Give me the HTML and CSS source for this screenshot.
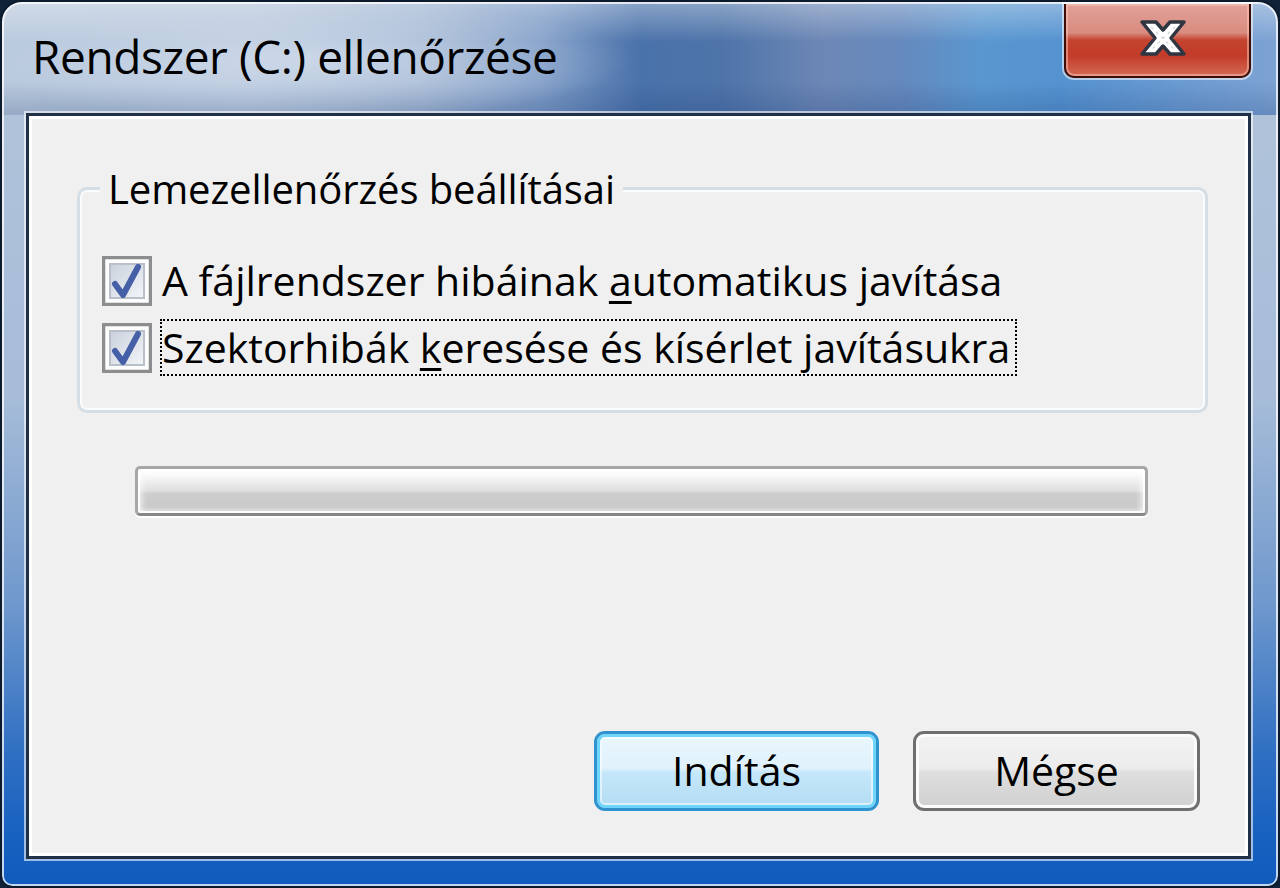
FILE: index.html
```html
<!DOCTYPE html>
<html lang="hu">
<head>
<meta charset="utf-8">
<title>Rendszer (C:) ellenőrzése</title>
<link rel="stylesheet" href="styles.css">
</head>
<body>
<div class="window">
  <div class="titlebar">
    <div class="title">Rendszer (C:) ellenőrzése</div>
    <button class="close" aria-label="Bezárás">
      <svg width="187" height="74" viewBox="0 0 187 74">
        <path d="M78 19 L92 19 L99 27 L106 19 L120 19 L107 35 L120 51 L106 51 L99 43 L92 51 L78 51 L91 35 Z" fill="#ffffff" stroke="#2f3541" stroke-width="3.5" stroke-linejoin="round"/>
        <path d="M87 24 L111 47 M111 24 L87 47" stroke="#d6d9df" stroke-width="1.5" stroke-dasharray="3 4" fill="none"/>
      </svg>
    </button>
  </div>
  <div class="client">
    <div class="group">
      <span class="legend">Lemezellenőrzés beállításai</span>
      <label class="row">
        <span class="cb">
          <svg width="50" height="50" viewBox="0 0 50 50">
            <defs>
              <linearGradient id="cbin" x1="0" y1="0" x2="1" y2="1">
                <stop offset="0" stop-color="#c9d1dc"/>
                <stop offset="1" stop-color="#f3f5f8"/>
              </linearGradient>
            </defs>
            <rect x="1.5" y="1.5" width="47" height="47" fill="#fdfdfd" stroke="#8c8d8e" stroke-width="3.5"/>
            <rect x="8" y="8" width="34" height="34" fill="url(#cbin)" stroke="#b9c0c9" stroke-width="2"/>
            <path d="M13 28 L21 39 L36 11" stroke="#4660a8" stroke-width="6" stroke-linecap="round" stroke-linejoin="round" fill="none"/>
          </svg>
        </span>
        <span class="text">A fájlrendszer hibáinak <u>a</u>utomatikus javítása</span>
      </label>
      <label class="row">
        <span class="cb">
          <svg width="50" height="50" viewBox="0 0 50 50">
            <rect x="1.5" y="1.5" width="47" height="47" fill="#fdfdfd" stroke="#8c8d8e" stroke-width="3.5"/>
            <rect x="8" y="8" width="34" height="34" fill="url(#cbin)" stroke="#b9c0c9" stroke-width="2"/>
            <path d="M13 28 L21 39 L36 11" stroke="#4660a8" stroke-width="6" stroke-linecap="round" stroke-linejoin="round" fill="none"/>
          </svg>
        </span>
        <span class="text focus">Szektorhibák <u>k</u>eresése és kísérlet javításukra</span>
      </label>
    </div>
    <div class="progress"></div>
    <div class="buttons">
      <button class="btn default">Indítás</button>
      <button class="btn cancel">Mégse</button>
    </div>
  </div>
</div>
</body>
</html>
```

FILE: styles.css
```css
html, body {
  margin: 0;
  padding: 0;
}

body {
  background: #0f2238;
  font-family: "Open Sans", "Noto Sans", sans-serif;
  font-weight: 500;
  color: #000;
}

.window {
  width: 1280px;
  height: 888px;
  box-sizing: border-box;
  border: 2px solid #0d1a2b;
  border-radius: 22px 22px 12px 12px;
  padding: 0 27px 27px 24px;
  display: flex;
  flex-direction: column;
  box-shadow: inset 0 0 0 2px rgba(255, 255, 255, 0.75);
  background:
    radial-gradient(ellipse 330px 60px at 300px 58px, rgba(214, 224, 238, 0.75), rgba(214, 224, 238, 0)),
    linear-gradient(180deg, rgba(255, 255, 255, 0.35) 0px, rgba(255, 255, 255, 0) 40px, rgba(20, 50, 110, 0) 80px, rgba(20, 50, 110, 0.2) 111px) top left / 100% 113px no-repeat,
    linear-gradient(90deg, #b9c9dd 0px, #b3c4da 250px, #9db3d0 420px, #7d9bc6 540px, #4a72aa 640px, #4e74a9 720px, #6c87b5 820px, #6589bd 900px, #5a97d0 980px, #5592d0 1060px, #7ea3d3 1280px) top left / 100% 113px no-repeat,
    linear-gradient(180deg, #b3c5db 0%, #a6bcd8 45%, #6f98cd 68%, #2f6fc2 85%, #1660c0 95%, #0f5abb 100%);
}

.titlebar {
  height: 111px;
  flex: none;
  display: flex;
  align-items: flex-start;
}

.title {
  margin-left: 6px;
  padding-top: 23px;
  font-size: 46px;
  line-height: 62px;
  letter-spacing: -0.4px;
  white-space: nowrap;
}

.close {
  margin-left: auto;
  margin-top: 2px;
  width: 187px;
  height: 74px;
  padding: 0;
  border: 2px solid #3d0d08;
  border-top: none;
  border-radius: 0 0 10px 10px;
  background: linear-gradient(180deg, #e2a198 0%, #d98c80 40%, #c4442f 50%, #c23c28 72%, #d26a55 100%);
  box-shadow: inset 0 0 0 2px rgba(255, 200, 190, 0.5), 0 0 0 2px rgba(255, 255, 255, 0.55);
  display: flex;
  align-items: center;
  justify-content: center;
}

.close svg {
  display: block;
  margin: -2px;
}

.client {
  flex: 1;
  border: 3px solid #1f3047;
  background: #f0f0f0;
  box-shadow: 0 0 0 2px rgba(255, 255, 255, 0.6), inset 0 0 0 3px #ffffff;
  display: flex;
  flex-direction: column;
}

.group {
  position: relative;
  margin: 71px 40px 0 48px;
  height: 226px;
  box-sizing: border-box;
  border: 3px solid #d5dee5;
  border-radius: 10px;
  box-shadow: inset 0 0 0 2px #fbfcfd;
  padding: 62px 0 0 22px;
  display: flex;
  flex-direction: column;
  gap: 10px;
}

.legend {
  position: absolute;
  left: 20px;
  top: -26px;
  padding: 0 8px;
  background: #f0f0f0;
  font-size: 40px;
  line-height: 50px;
  letter-spacing: -0.1px;
  white-space: nowrap;
}

.row {
  display: flex;
  align-items: center;
  height: 57px;
}

.cb {
  width: 50px;
  height: 50px;
  flex: none;
}

.cb svg {
  display: block;
}

.text {
  margin-left: 8px;
  border: 2px dotted transparent;
  padding-right: 5px;
  font-size: 41px;
  line-height: 53px;
  white-space: nowrap;
}

.text u {
  text-decoration-thickness: 3px;
  text-underline-offset: 5px;
}

.text.focus {
  border-color: #000;
}

.progress {
  margin: 53px 100px 0 106px;
  height: 50px;
  box-sizing: border-box;
  border: 3px solid #a7a7a7;
  border-bottom-color: #878787;
  border-radius: 5px;
  background: linear-gradient(180deg, #ffffff 0%, #fafafa 14%, #e8e8e8 36%, #dedede 50%, #cdcdcd 56%, #cacaca 86%, #e6e6e6 100%);
  box-shadow:
    inset 0 0 0 2px rgba(255, 255, 255, 0.85),
    inset 10px 0 6px -6px rgba(255, 255, 255, 0.7),
    inset -10px 0 6px -6px rgba(255, 255, 255, 0.7),
    0 2px 0 rgba(255, 255, 255, 0.9);
}

.buttons {
  margin-top: auto;
  margin-bottom: 45px;
  padding-right: 48px;
  display: flex;
  justify-content: flex-end;
  gap: 34px;
}

.btn {
  height: 80px;
  box-sizing: border-box;
  padding: 0 0 2px;
  font-family: "Open Sans", "Noto Sans", sans-serif;
  font-weight: 500;
  font-size: 41px;
  line-height: 50px;
  color: #000;
  border-radius: 11px;
}

.btn.default {
  width: 285px;
  border: 3px solid #2e93cf;
  background: linear-gradient(180deg, #eaf6fd 0%, #e0f2fc 46%, #c5e7fa 52%, #b3dcf3 100%);
  box-shadow: inset 0 0 0 3px #6fd5fb, inset 0 0 0 5px rgba(255, 255, 255, 0.55);
}

.btn.cancel {
  width: 287px;
  border: 3px solid #6f6f6f;
  background: linear-gradient(180deg, #f3f3f3 0%, #ececec 46%, #dedede 52%, #d0d0d0 100%);
  box-shadow: inset 0 0 0 3px #fbfbfb;
}
```
